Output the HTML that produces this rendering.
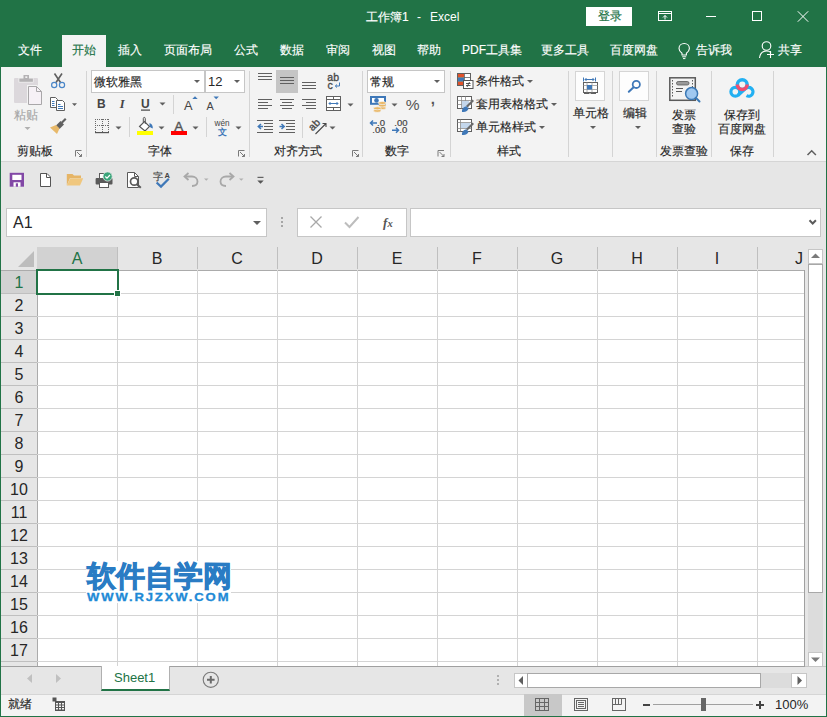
<!DOCTYPE html>
<html><head><meta charset="utf-8">
<style>
*{margin:0;padding:0;box-sizing:border-box}
html,body{width:827px;height:717px;overflow:hidden;background:#217346;font-family:"Liberation Sans",sans-serif;color:#262626}
.a{position:absolute}
.t{position:absolute;font-size:12px;line-height:14px;white-space:nowrap;-webkit-text-stroke:0.15px currentColor}
.w{color:#fff}
.sep{position:absolute;width:1px;background:#d4d4d4}
.dd{position:absolute;width:0;height:0;border-left:3px solid transparent;border-right:3px solid transparent;border-top:3px solid #5f5f5f}
.hl{position:absolute;height:1px;background:#d4d4d4}
.vl{position:absolute;width:1px;background:#d4d4d4}
.ch{position:absolute;top:249px;font-size:16px;line-height:19px;width:80px;text-align:center;color:#262626}
.rh{position:absolute;left:1px;width:36px;font-size:16px;line-height:19px;text-align:center;color:#262626}
</style></head><body>
<!-- title bar -->
<div class="t w" style="left:366px;top:10px;">工作簿1</div><div class="t w" style="-webkit-text-stroke:0;left:417px;top:10px;">-</div><div class="t w" style="-webkit-text-stroke:0;left:430px;top:10px">Excel</div>
<div class="a" style="left:586px;top:7px;width:46px;height:19px;background:#fff"></div>
<div class="t" style="left:598px;top:9px;color:#217346">登录</div>

<!-- tabs -->
<div class="a" style="left:62px;top:35px;width:44px;height:32px;background:#f3f3f3"></div>
<div class="t w" style="left:18px;top:42.5px">文件</div>
<div class="t" style="left:72px;top:42.5px;color:#217346">开始</div>
<div class="t w" style="left:118px;top:42.5px">插入</div>
<div class="t w" style="left:164px;top:42.5px">页面布局</div>
<div class="t w" style="left:234px;top:42.5px">公式</div>
<div class="t w" style="left:280px;top:42.5px">数据</div>
<div class="t w" style="left:326px;top:42.5px">审阅</div>
<div class="t w" style="left:372px;top:42.5px">视图</div>
<div class="t w" style="left:417px;top:42.5px">帮助</div>
<div class="t w" style="left:462px;top:42.5px">PDF工具集</div>
<div class="t w" style="left:541px;top:42.5px">更多工具</div>
<div class="t w" style="left:610px;top:42.5px">百度网盘</div>
<div class="t w" style="left:696px;top:42.5px">告诉我</div>
<div class="t w" style="left:778px;top:42.5px">共享</div>

<!-- ribbon -->
<div class="a" style="left:1px;top:67px;width:825px;height:94px;background:#f3f3f3"></div>
<div class="a" style="left:1px;top:161px;width:825px;height:1px;background:#d5d5d5"></div>


<!-- ribbon separators -->
<div class="sep" style="left:86px;top:71px;height:86px"></div>
<div class="sep" style="left:249px;top:71px;height:86px"></div>
<div class="sep" style="left:362px;top:71px;height:86px"></div>
<div class="sep" style="left:450px;top:71px;height:86px"></div>
<div class="sep" style="left:568px;top:71px;height:86px"></div>
<div class="sep" style="left:612px;top:71px;height:86px"></div>
<div class="sep" style="left:656px;top:71px;height:86px"></div>
<div class="sep" style="left:711px;top:71px;height:86px"></div>
<div class="sep" style="left:773px;top:71px;height:86px"></div>
<!-- ribbon labels -->
<div class="t" style="left:14px;top:108px;color:#a6a6a6">粘贴</div>
<div class="t" style="left:17px;top:144px">剪贴板</div>
<div class="t" style="left:148px;top:144px">字体</div>
<div class="t" style="left:274px;top:144px">对齐方式</div>
<div class="t" style="left:385px;top:144px">数字</div>
<div class="t" style="left:497px;top:144px">样式</div>
<div class="t" style="left:660px;top:144px">发票查验</div>
<div class="t" style="left:730px;top:144px">保存</div>
<!-- font boxes -->
<div class="a" style="left:91px;top:70px;width:114px;height:23px;background:#fff;border:1px solid #c6c6c6"></div>
<div class="a" style="left:205px;top:70px;width:40px;height:23px;background:#fff;border:1px solid #c6c6c6"></div>
<div class="t" style="left:94px;top:75px">微软雅黑</div>
<div class="t" style="-webkit-text-stroke:0;left:208px;top:75px;font-size:13px">12</div>
<div class="dd" style="left:194px;top:80px"></div>
<div class="dd" style="left:234px;top:80px"></div>
<div class="a" style="left:367px;top:70px;width:78px;height:23px;background:#fff;border:1px solid #c6c6c6"></div>
<div class="t" style="left:370px;top:75px">常规</div>
<div class="dd" style="left:434px;top:80px"></div>
<div class="t" style="left:476px;top:74px">条件格式</div>
<div class="t" style="left:476px;top:97px">套用表格格式</div>
<div class="t" style="left:476px;top:120px">单元格样式</div>
<div class="dd" style="left:527px;top:80px"></div>
<div class="dd" style="left:551px;top:103px"></div>
<div class="dd" style="left:539px;top:126px"></div>
<div class="a" style="left:575px;top:71px;width:30px;height:30px;background:#fdfdfd;border:1px solid #d5d5d5"></div>
<div class="t" style="left:573px;top:106px">单元格</div>
<div class="dd" style="left:590px;top:126px"></div>
<div class="a" style="left:619px;top:71px;width:30px;height:30px;background:#fdfdfd;border:1px solid #d5d5d5"></div>
<div class="t" style="left:623px;top:106px">编辑</div>
<div class="dd" style="left:635px;top:126px"></div>
<div class="t" style="left:672px;top:108px">发票</div>
<div class="t" style="left:672px;top:122px">查验</div>
<div class="t" style="left:724px;top:108px">保存到</div>
<div class="t" style="left:718px;top:122px">百度网盘</div>

<!-- QAT + formula area -->
<div class="a" style="left:1px;top:162px;width:825px;height:504px;background:#e6e6e6"></div>


<!-- name box / formula bar -->
<div class="a" style="left:6px;top:208px;width:261px;height:29px;background:#fff;border:1px solid #c6c6c6"></div>
<div class="t" style="-webkit-text-stroke:0;left:13px;top:214px;font-size:16px;line-height:18px">A1</div>
<div class="dd" style="left:253px;top:221px;border-left-width:4px;border-right-width:4px;border-top-width:4px"></div>
<div class="a" style="left:281px;top:217px;width:2px;height:2px;background:#a6a6a6"></div>
<div class="a" style="left:281px;top:221px;width:2px;height:2px;background:#a6a6a6"></div>
<div class="a" style="left:281px;top:225px;width:2px;height:2px;background:#a6a6a6"></div>
<div class="a" style="left:297px;top:208px;width:110px;height:29px;background:#fff;border:1px solid #c6c6c6"></div>
<div class="a" style="left:410px;top:208px;width:411px;height:29px;background:#fff;border:1px solid #c6c6c6"></div>

<!-- grid -->
<div class="a" id="grid" style="left:37px;top:270px;width:768px;height:396px;background:#fff"></div>
<div class="a" style="left:37px;top:247px;width:80px;height:22px;background:#d2d2d2"></div>
<div class="vl" style="left:117px;top:247px;height:22px;background:#bfbfbf"></div>
<div class="vl" style="left:197px;top:247px;height:22px;background:#bfbfbf"></div>
<div class="vl" style="left:277px;top:247px;height:22px;background:#bfbfbf"></div>
<div class="vl" style="left:357px;top:247px;height:22px;background:#bfbfbf"></div>
<div class="vl" style="left:437px;top:247px;height:22px;background:#bfbfbf"></div>
<div class="vl" style="left:517px;top:247px;height:22px;background:#bfbfbf"></div>
<div class="vl" style="left:597px;top:247px;height:22px;background:#bfbfbf"></div>
<div class="vl" style="left:677px;top:247px;height:22px;background:#bfbfbf"></div>
<div class="vl" style="left:757px;top:247px;height:22px;background:#bfbfbf"></div>
<div class="hl" style="left:1px;top:270px;width:804px;background:#ababab"></div>
<div class="ch" style="left:37px;color:#217346">A</div>
<div class="ch" style="left:117px;color:#262626">B</div>
<div class="ch" style="left:197px;color:#262626">C</div>
<div class="ch" style="left:277px;color:#262626">D</div>
<div class="ch" style="left:357px;color:#262626">E</div>
<div class="ch" style="left:437px;color:#262626">F</div>
<div class="ch" style="left:517px;color:#262626">G</div>
<div class="ch" style="left:597px;color:#262626">H</div>
<div class="ch" style="left:677px;color:#262626">I</div>
<div class="ch" style="left:759px;width:80px;text-align:center">J</div>
<div class="a" style="left:1px;top:271px;width:36px;height:22px;background:#d2d2d2"></div>
<div class="rh" style="top:273px;color:#217346">1</div>
<div class="hl" style="left:1px;top:293px;width:36px;background:#bfbfbf"></div>
<div class="rh" style="top:296px;color:#262626">2</div>
<div class="hl" style="left:1px;top:316px;width:36px;background:#bfbfbf"></div>
<div class="rh" style="top:319px;color:#262626">3</div>
<div class="hl" style="left:1px;top:339px;width:36px;background:#bfbfbf"></div>
<div class="rh" style="top:342px;color:#262626">4</div>
<div class="hl" style="left:1px;top:362px;width:36px;background:#bfbfbf"></div>
<div class="rh" style="top:365px;color:#262626">5</div>
<div class="hl" style="left:1px;top:385px;width:36px;background:#bfbfbf"></div>
<div class="rh" style="top:388px;color:#262626">6</div>
<div class="hl" style="left:1px;top:408px;width:36px;background:#bfbfbf"></div>
<div class="rh" style="top:411px;color:#262626">7</div>
<div class="hl" style="left:1px;top:431px;width:36px;background:#bfbfbf"></div>
<div class="rh" style="top:434px;color:#262626">8</div>
<div class="hl" style="left:1px;top:454px;width:36px;background:#bfbfbf"></div>
<div class="rh" style="top:457px;color:#262626">9</div>
<div class="hl" style="left:1px;top:477px;width:36px;background:#bfbfbf"></div>
<div class="rh" style="top:480px;color:#262626">10</div>
<div class="hl" style="left:1px;top:500px;width:36px;background:#bfbfbf"></div>
<div class="rh" style="top:503px;color:#262626">11</div>
<div class="hl" style="left:1px;top:523px;width:36px;background:#bfbfbf"></div>
<div class="rh" style="top:526px;color:#262626">12</div>
<div class="hl" style="left:1px;top:546px;width:36px;background:#bfbfbf"></div>
<div class="rh" style="top:549px;color:#262626">13</div>
<div class="hl" style="left:1px;top:569px;width:36px;background:#bfbfbf"></div>
<div class="rh" style="top:572px;color:#262626">14</div>
<div class="hl" style="left:1px;top:592px;width:36px;background:#bfbfbf"></div>
<div class="rh" style="top:595px;color:#262626">15</div>
<div class="hl" style="left:1px;top:615px;width:36px;background:#bfbfbf"></div>
<div class="rh" style="top:618px;color:#262626">16</div>
<div class="hl" style="left:1px;top:638px;width:36px;background:#bfbfbf"></div>
<div class="rh" style="top:641px;color:#262626">17</div>
<div class="hl" style="left:1px;top:661px;width:36px;background:#bfbfbf"></div>
<div class="vl" style="left:37px;top:270px;height:396px;background:#ababab"></div>
<div class="vl" style="left:117px;top:270px;height:396px"></div>
<div class="vl" style="left:197px;top:270px;height:396px"></div>
<div class="vl" style="left:277px;top:270px;height:396px"></div>
<div class="vl" style="left:357px;top:270px;height:396px"></div>
<div class="vl" style="left:437px;top:270px;height:396px"></div>
<div class="vl" style="left:517px;top:270px;height:396px"></div>
<div class="vl" style="left:597px;top:270px;height:396px"></div>
<div class="vl" style="left:677px;top:270px;height:396px"></div>
<div class="vl" style="left:757px;top:270px;height:396px"></div>
<div class="hl" style="left:37px;top:293px;width:768px"></div>
<div class="hl" style="left:37px;top:316px;width:768px"></div>
<div class="hl" style="left:37px;top:339px;width:768px"></div>
<div class="hl" style="left:37px;top:362px;width:768px"></div>
<div class="hl" style="left:37px;top:385px;width:768px"></div>
<div class="hl" style="left:37px;top:408px;width:768px"></div>
<div class="hl" style="left:37px;top:431px;width:768px"></div>
<div class="hl" style="left:37px;top:454px;width:768px"></div>
<div class="hl" style="left:37px;top:477px;width:768px"></div>
<div class="hl" style="left:37px;top:500px;width:768px"></div>
<div class="hl" style="left:37px;top:523px;width:768px"></div>
<div class="hl" style="left:37px;top:546px;width:768px"></div>
<div class="hl" style="left:37px;top:569px;width:768px"></div>
<div class="hl" style="left:37px;top:592px;width:768px"></div>
<div class="hl" style="left:37px;top:615px;width:768px"></div>
<div class="hl" style="left:37px;top:638px;width:768px"></div>
<div class="hl" style="left:37px;top:661px;width:768px"></div>
<div class="a" style="left:36px;top:269px;width:83px;height:26px;border:2px solid #217346"></div>
<div class="a" style="left:115px;top:291px;width:5px;height:5px;background:#217346;outline:1px solid #fff"></div>

<!-- sheet tab bar -->
<div class="a" style="left:1px;top:666px;width:825px;height:28px;background:#e6e6e6;border-top:1px solid #c6c6c6"></div>
<!-- status -->
<div class="a" style="left:1px;top:694px;width:825px;height:22px;background:#f3f3f3;border-top:1px solid #d5d5d5"></div>

<!-- grid borders -->
<div class="vl" style="left:804px;top:270px;height:397px;background:#a0a0a0"></div>
<div class="hl" style="left:1px;top:666px;width:804px;background:#a0a0a0"></div>
<!-- corner triangle -->
<svg class="a" style="left:18px;top:251px" width="16" height="16"><path d="M16 0 L16 16 L0 16 Z" fill="#bdbdbd"/></svg>
<!-- v scrollbar -->
<div class="a" style="left:808px;top:249px;width:15px;height:15px;background:#fff;border:1px solid #c6c6c6"></div>
<svg class="a" style="left:811px;top:253px" width="9" height="6"><path d="M0 5 L4.5 0.5 L9 5 Z" fill="#7a7a7a"/></svg>
<div class="a" style="left:808px;top:264px;width:15px;height:329px;background:#fff;border:1px solid #a8a8a8"></div>
<div class="a" style="left:808px;top:593px;width:15px;height:59px;background:#dcdcdc"></div>
<div class="a" style="left:808px;top:652px;width:15px;height:15px;background:#fff;border:1px solid #c6c6c6"></div>
<svg class="a" style="left:811px;top:657px" width="9" height="6"><path d="M0 0.5 L4.5 5 L9 0.5 Z" fill="#7a7a7a"/></svg>

<!-- watermark -->
<div class="a" style="left:86px;top:561px;width:145px;height:42px;background:#fff"></div>
<div class="t" style="left:87px;top:560px;font-size:28.6px;line-height:32px;font-weight:bold;color:#2a7cc4;-webkit-text-stroke:0.9px #2a7cc4;letter-spacing:0px">软件自学网</div>
<div class="t" style="left:87px;top:591px;font-size:11px;line-height:12px;font-weight:bold;color:#1e8ad6;letter-spacing:1.6px;transform:scaleX(1.185);transform-origin:0 0;-webkit-text-stroke:0.3px #1e8ad6">WWW.RJZXW.COM</div>

<!-- sheet tabs -->
<svg class="a" style="left:27px;top:674px" width="6" height="9"><path d="M5 0 L0 4.5 L5 9 Z" fill="#c0c0c0"/></svg>
<svg class="a" style="left:56px;top:674px" width="6" height="9"><path d="M0 0 L5 4.5 L0 9 Z" fill="#c0c0c0"/></svg>
<div class="a" style="left:101px;top:666px;width:69px;height:25px;background:#fff;border-left:1px solid #b0b0b0;border-right:1px solid #b0b0b0;border-bottom:2px solid #217346"></div>
<div class="t" style="-webkit-text-stroke:0;left:114px;top:670px;font-size:13px;line-height:16px;color:#217346">Sheet1</div>
<svg class="a" style="left:202px;top:671px" width="18" height="18"><circle cx="8.8" cy="8.8" r="7.6" fill="none" stroke="#7a7a7a" stroke-width="1.1"/><path d="M8.8 5 V12.6 M5 8.8 H12.6" stroke="#6a6a6a" stroke-width="2"/></svg>
<div class="a" style="left:497px;top:675px;width:2px;height:2px;background:#b0b0b0"></div>
<div class="a" style="left:497px;top:679px;width:2px;height:2px;background:#b0b0b0"></div>
<div class="a" style="left:497px;top:683px;width:2px;height:2px;background:#b0b0b0"></div>
<!-- h scrollbar -->
<div class="a" style="left:514px;top:673px;width:14px;height:15px;background:#fff;border:1px solid #c6c6c6"></div>
<svg class="a" style="left:518px;top:676px" width="6" height="9"><path d="M5 0 L0.5 4.5 L5 9 Z" fill="#5f5f5f"/></svg>
<div class="a" style="left:527px;top:673px;width:234px;height:15px;background:#fff;border:1px solid #a8a8a8"></div>
<div class="a" style="left:761px;top:673px;width:30px;height:15px;background:#dcdcdc"></div>
<div class="a" style="left:791px;top:673px;width:16px;height:15px;background:#fff;border:1px solid #c6c6c6"></div>
<svg class="a" style="left:797px;top:676px" width="6" height="9"><path d="M0.5 0 L5 4.5 L0.5 9 Z" fill="#5f5f5f"/></svg>
<!-- status bar -->
<div class="t" style="left:8px;top:697px">就绪</div>
<div class="a" style="left:524px;top:694px;width:38px;height:22px;background:#c8c8c8"></div>
<div class="t" style="-webkit-text-stroke:0;left:775px;top:697px;font-size:13px;line-height:15px">100%</div>
<div class="a" style="left:643px;top:704px;width:7px;height:2px;background:#444"></div>
<div class="a" style="left:653px;top:704px;width:100px;height:1px;background:#a0a0a0"></div>
<div class="a" style="left:701px;top:698px;width:5px;height:13px;background:#666"></div>
<div class="a" style="left:756px;top:704px;width:8px;height:2px;background:#444"></div>
<div class="a" style="left:759px;top:701px;width:2px;height:8px;background:#444"></div>

<svg class="a" style="left:0;top:0" width="827" height="717" viewBox="0 0 827 717">
<!-- title bar icons -->
<g fill="none" stroke="#fff" stroke-width="1">
<rect x="658.5" y="11.5" width="13" height="9"/>
<path d="M658.5 13.5 H671.5 M665 19.5 V15.5 M663 17.5 L665 15.5 L667 17.5"/>
<path d="M706 16.5 H716"/>
<rect x="752.5" y="11.5" width="9" height="9"/>
<path d="M797.8 11.3 L808.2 21.7 M808.2 11.3 L797.8 21.7"/>
<!-- lightbulb -->
<path d="M682 55 V53.2 C680.2 51.8 679 50.3 679 48.5 C679 45.6 681.3 43.5 684.2 43.5 C687.1 43.5 689.4 45.6 689.4 48.5 C689.4 50.3 688.2 51.8 686.4 53.2 V55 Z" stroke-width="1.1"/>
<path d="M682.2 56.8 H686.2 M683 58.6 H685.4"/>
<!-- person -->
<circle cx="766.5" cy="46" r="4.3" stroke-width="1.1"/>
<path d="M759.5 58 C760 53.5 762.5 51 766.5 51 C768.5 51 770 51.6 771 52.5" stroke-width="1.1"/>
<path d="M770.5 51 V58 M767 54.5 H774" stroke-width="1.1"/>
</g>

<!-- clipboard (paste) -->
<rect x="14" y="78" width="24" height="25" rx="1" fill="#dcd8dc"/>
<path d="M18.5 78 H33.5 V82.5 H18.5 Z" fill="#f3f3f3"/>
<rect x="19.3" y="78.5" width="13.6" height="3.3" fill="#b4b2b4"/>
<rect x="23.5" y="75" width="5.5" height="4" fill="#b4b2b4"/>
<rect x="25.3" y="76.3" width="2" height="1.7" fill="#f3f3f3"/>
<path d="M27 85 H37 L43 91 V105.6 H27 Z" fill="#f3f3f3"/>
<path d="M28.5 86.5 H36.5 L41.5 91.5 V104.5 H28.5 Z" fill="#f6f1f6" stroke="#a9a7a9" stroke-width="1"/>
<path d="M36.5 86.5 V91.5 H41.5" fill="none" stroke="#a9a7a9" stroke-width="1"/>
<!-- paste dropdown -->
<path d="M24.5 127 H30.5 L27.5 130 Z" fill="#b0b0b0"/>

<!-- scissors -->
<path d="M54.5 73.5 L60.5 82.5 M62 73.5 L56 82.5" stroke="#5f5f5f" stroke-width="1.6" fill="none"/>
<circle cx="54.2" cy="85" r="2.6" fill="none" stroke="#4a86c8" stroke-width="1.2"/>
<circle cx="62" cy="85" r="2.6" fill="none" stroke="#4a86c8" stroke-width="1.2"/>
<!-- copy -->
<path d="M50.5 97.5 H55.5 L57.5 99.5 V107.5 H50.5 Z" fill="#fff" stroke="#5f5f5f" stroke-width="1"/>
<path d="M52 101.5 H54.5 M52 103.5 H54.5 M52 105.5 H54.5" stroke="#3f78b8" stroke-width="1"/>
<path d="M56.5 100.5 H62.5 L64.5 102.5 V110.5 H56.5 Z" fill="#fff" stroke="#5f5f5f" stroke-width="1"/>
<path d="M58 104.5 H60.5 M58 106.5 H63 M58 108.5 H63" stroke="#3f78b8" stroke-width="1"/>
<path d="M72 103.3 H77 L74.5 106 Z" fill="#5f5f5f"/>
<!-- format painter -->
<path d="M61 122 L65 118 L66.5 119.5 L62.5 123.5 Z" fill="#606060"/>
<path d="M56 125.5 L60.5 121 L64 124.5 L59.5 129 Z" fill="#606060"/>
<path d="M50 127.5 L56 125 L59.5 128.5 L57 134 Z" fill="#e8b96a"/>

<!-- dialog launchers -->
<g fill="none" stroke="#7a7a7a" stroke-width="1">
<path d="M75.5 156.5 V150.5 H81.5 M77 152 L81.5 156.5 M79 156.5 H81.5 V154"/>
<path d="M238.5 156.5 V150.5 H244.5 M240 152 L244.5 156.5 M242 156.5 H244.5 V154"/>
<path d="M352.5 156.5 V150.5 H358.5 M354 152 L358.5 156.5 M356 156.5 H358.5 V154"/>
<path d="M438 156.5 V150.5 H444 M439.5 152 L444 156.5 M441.5 156.5 H444 V154"/>
</g>
<!-- collapse chevron -->
<path d="M807.5 155 L811.7 150.8 L815.9 155" fill="none" stroke="#5f5f5f" stroke-width="1.5"/>
</svg>


<svg class="a" style="left:0;top:0" width="827" height="717" viewBox="0 0 827 717">
<!-- font group -->
<text x="97" y="108.3" font-family="Liberation Sans" font-weight="bold" font-size="12" fill="#444">B</text>
<text x="119.8" y="108.2" font-family="Liberation Serif" font-style="italic" font-weight="bold" font-size="12.5" fill="#444">I</text>
<text x="141" y="108.3" font-family="Liberation Sans" font-weight="bold" font-size="12" fill="#444">U</text>
<rect x="141" y="109.5" width="9" height="1.2" fill="#444"/>
<path d="M159.5 102.5 H165.5 L162.5 105.5 Z" fill="#5f5f5f"/>
<rect x="173" y="95" width="1" height="19" fill="#d4d4d4"/>
<text x="184" y="109.6" font-family="Liberation Sans" font-size="12.8" fill="#444">A</text>
<path d="M192.3 99 L195 96.3 L197.7 99 Z" fill="#3f78b8"/>
<text x="206.5" y="109.6" font-family="Liberation Sans" font-size="10.8" fill="#444">A</text>
<path d="M213.5 96.5 L216.2 99.2 L218.9 96.5 Z" fill="#3f78b8"/>
<!-- borders -->
<g fill="#6a6a6a"><rect x="95" y="119" width="1" height="1"/><rect x="95" y="121" width="1" height="1"/><rect x="95" y="123" width="1" height="1"/><rect x="95" y="125" width="1" height="1"/><rect x="95" y="127" width="1" height="1"/><rect x="95" y="129" width="1" height="1"/><rect x="95" y="131" width="1" height="1"/><rect x="102" y="119" width="1" height="1"/><rect x="102" y="121" width="1" height="1"/><rect x="102" y="123" width="1" height="1"/><rect x="102" y="125" width="1" height="1"/><rect x="102" y="127" width="1" height="1"/><rect x="102" y="129" width="1" height="1"/><rect x="102" y="131" width="1" height="1"/><rect x="108" y="119" width="1" height="1"/><rect x="108" y="121" width="1" height="1"/><rect x="108" y="123" width="1" height="1"/><rect x="108" y="125" width="1" height="1"/><rect x="108" y="127" width="1" height="1"/><rect x="108" y="129" width="1" height="1"/><rect x="108" y="131" width="1" height="1"/><rect x="95" y="119" width="1" height="1"/><rect x="97" y="119" width="1" height="1"/><rect x="99" y="119" width="1" height="1"/><rect x="101" y="119" width="1" height="1"/><rect x="103" y="119" width="1" height="1"/><rect x="105" y="119" width="1" height="1"/><rect x="107" y="119" width="1" height="1"/><rect x="95" y="125" width="1" height="1"/><rect x="97" y="125" width="1" height="1"/><rect x="99" y="125" width="1" height="1"/><rect x="101" y="125" width="1" height="1"/><rect x="103" y="125" width="1" height="1"/><rect x="105" y="125" width="1" height="1"/><rect x="107" y="125" width="1" height="1"/></g>
<rect x="95" y="132" width="14" height="1.2" fill="#555"/>
<path d="M115.5 126.5 H121.5 L118.5 129.5 Z" fill="#5f5f5f"/>
<rect x="129" y="117" width="1" height="20" fill="#d4d4d4"/>
<!-- fill color -->
<path d="M139.5 126.5 L144.5 121.5 L149.5 126.5 L145 131 Z" fill="#fff" stroke="#555" stroke-width="1.1"/>
<path d="M143.3 122.5 V118.5 C143.3 117 145.3 117 145.3 118.5 V124" fill="none" stroke="#555" stroke-width="1"/>
<path d="M149.5 123 C151.5 123.5 153 125.5 152.8 128.5 C151 128 149.8 127 149.5 126 Z" fill="#3f78b8"/>
<rect x="137" y="131" width="16" height="4" fill="#ffff00"/>
<path d="M158.5 126.5 H164.5 L161.5 129.5 Z" fill="#5f5f5f"/>
<!-- font color -->
<text x="174.3" y="130.5" font-family="Liberation Sans" font-size="13.5" fill="#555" stroke="#555" stroke-width="0.4">A</text>
<rect x="171" y="131" width="16" height="4" fill="#ff0000"/>
<path d="M192.5 126.5 H198.5 L195.5 129.5 Z" fill="#5f5f5f"/>
<rect x="206" y="117" width="1" height="20" fill="#d4d4d4"/>
<!-- phonetic -->
<text x="214.5" y="126.3" font-family="Liberation Sans" font-size="8.2" fill="#444">wén</text>
<text x="218" y="134.8" font-size="9" fill="#3f78b8" font-weight="bold">文</text>
<path d="M235.5 126.5 H241.5 L238.5 129.5 Z" fill="#5f5f5f"/>
</svg>


<svg class="a" style="left:0;top:0" width="827" height="717" viewBox="0 0 827 717">
<!-- alignment -->
<rect x="276" y="70" width="22" height="23" fill="#c5c5c5"/>
<g stroke="#606060" stroke-width="1" fill="none">
<path d="M258 73.5 H272 M258 76.5 H272 M258 79.5 H272"/>
<path d="M280 77.5 H294 M280 80.5 H294 M280 83.5 H294"/>
<path d="M302 82.5 H316 M302 85.5 H316 M302 88.5 H316"/>
<path d="M258 99.5 H272 M258 102.5 H268 M258 105.5 H272 M258 108.5 H268"/>
<path d="M280 99.5 H294 M282 102.5 H292 M280 105.5 H294 M282 108.5 H292"/>
<path d="M302 99.5 H316 M306 102.5 H316 M302 105.5 H316 M306 108.5 H316"/>
<path d="M257 120.5 H273 M264 123.5 H273 M264 126.5 H273 M264 129.5 H273 M257 132.5 H273"/>
<path d="M279 120.5 H295 M286 123.5 H295 M286 126.5 H295 M286 129.5 H295 M279 132.5 H295"/>
</g>
<path d="M263 126.5 H258.5 M261 124 L258.3 126.5 L261 129" stroke="#3f78b8" stroke-width="1.5" fill="none"/>
<path d="M279.5 126.5 H284 M281.5 124 L284.2 126.5 L281.5 129" stroke="#3f78b8" stroke-width="1.5" fill="none"/>
<text x="327.3" y="80.8" font-family="Liberation Sans" font-size="10.5" fill="#4a4a4a" stroke="#4a4a4a" stroke-width="0.35">ab</text>
<text x="327.5" y="88.5" font-family="Liberation Sans" font-size="10.5" fill="#4a4a4a" stroke="#4a4a4a" stroke-width="0.35">c</text>
<path d="M339.5 82.5 V86 H335.5 M337 84.5 L335.3 86 L337 87.5" stroke="#3f78b8" stroke-width="1" fill="none"/>
<!-- merge -->
<rect x="326.5" y="96.5" width="14" height="14" fill="#fff" stroke="#606060" stroke-width="1"/>
<path d="M326.5 99.5 H340.5 M326.5 107.5 H340.5 M333.5 96.5 V99.5 M333.5 107.5 V110.5" stroke="#606060" stroke-width="1" fill="none"/>
<path d="M329 103.5 H338 M330.5 102 L329 103.5 L330.5 105 M336.5 102 L338 103.5 L336.5 105" stroke="#3f78b8" stroke-width="1" fill="none"/>
<path d="M347.5 103.5 H353.5 L350.5 106.5 Z" fill="#5f5f5f"/>
<rect x="302" y="117" width="1" height="21" fill="#d4d4d4"/>
<!-- orientation -->
<text x="0" y="0" font-family="Liberation Sans" font-size="10.5" fill="#4a4a4a" stroke="#4a4a4a" stroke-width="0.35" transform="translate(312.5,131.5) rotate(-45)">ab</text>
<path d="M315.5 134 L326 123.5 M322.5 123.5 H326 V127" stroke="#4a4a4a" stroke-width="1.1" fill="none"/>
<path d="M329.5 126.5 H335.5 L332.5 129.5 Z" fill="#5f5f5f"/>

<!-- number -->
<rect x="371" y="97" width="14" height="6.8" fill="#fff" stroke="#3f78b8" stroke-width="2"/>
<circle cx="376.5" cy="100.4" r="2.3" fill="#3f78b8"/>
<g fill="#eab765" stroke="#f3f3f3" stroke-width="0.7">
<ellipse cx="382.3" cy="108" rx="3.8" ry="1.5"/>
<ellipse cx="382.3" cy="105.5" rx="3.8" ry="1.5"/>
<ellipse cx="382.3" cy="103" rx="3.8" ry="1.5"/>
<ellipse cx="377.3" cy="110.8" rx="3.8" ry="1.5"/>
<ellipse cx="377.3" cy="108.3" rx="3.8" ry="1.5"/>
</g>
<path d="M391.5 103.5 H397.5 L394.5 106.5 Z" fill="#5f5f5f"/>
<text x="405.8" y="110" font-family="Liberation Sans" font-size="15.5" fill="#555">%</text>
<text x="430.8" y="103.5" font-family="Liberation Sans" font-weight="bold" font-size="15" fill="#555">,</text>
<text x="377" y="126.2" font-family="Liberation Sans" font-size="9.5" fill="#444" stroke="#444" stroke-width="0.2">.0</text>
<text x="372.3" y="133" font-family="Liberation Sans" font-size="9.5" fill="#444" stroke="#444" stroke-width="0.2">.00</text>
<path d="M377 123 H370.5 M373 120.5 L370.5 123 L373 125.5" stroke="#3f78b8" stroke-width="1.5" fill="none"/>
<text x="394.3" y="126.2" font-family="Liberation Sans" font-size="9.5" fill="#444" stroke="#444" stroke-width="0.2">.00</text>
<text x="399.3" y="133" font-family="Liberation Sans" font-size="9.5" fill="#444" stroke="#444" stroke-width="0.2">.0</text>
<path d="M392 130.3 H398.5 M396 127.8 L398.5 130.3 L396 132.8" stroke="#3f78b8" stroke-width="1.5" fill="none"/>

<!-- styles -->
<rect x="457.5" y="73.5" width="13" height="12" fill="#fff" stroke="#606060" stroke-width="1"/>
<rect x="458" y="74" width="6" height="3" fill="#e0522b"/>
<rect x="458" y="78" width="6" height="3" fill="#3f78b8"/>
<rect x="458" y="82" width="6" height="3" fill="#e0522b"/>
<path d="M464.5 73.5 V85.5 M457.5 77.5 H470.5 M457.5 81.5 H470.5" stroke="#606060" stroke-width="0.8" fill="none"/>
<rect x="463.5" y="80.5" width="9.5" height="8" fill="#fff" stroke="#555" stroke-width="1"/>
<path d="M466 83.5 H470.5 M466 85.5 H470.5 M469.5 82 L467 87" stroke="#444" stroke-width="0.9" fill="none"/>
<!-- table format -->
<rect x="457.5" y="96.5" width="14" height="12" fill="#fff" stroke="#606060" stroke-width="1"/>
<path d="M457.5 100.5 H471.5 M457.5 104.5 H471.5 M461.5 96.5 V108.5 M465.5 96.5 V108.5" stroke="#8a8a8a" stroke-width="0.8" fill="none"/>
<rect x="462" y="101" width="7" height="7" fill="#c4d7ec"/>
<path d="M466 106 L472.5 99.5 L474 101 L467.5 107.5 Z" fill="#6a6a6a"/>
<path d="M462 112 C461.5 109 463.5 106.5 466.5 106.5 L468.5 108.5 C468 111 465.5 112.5 462 112 Z" fill="#3f78b8"/>
<!-- cell styles -->
<rect x="457.5" y="119.5" width="14" height="12" fill="#fff" stroke="#606060" stroke-width="1"/>
<path d="M457.5 122.5 H471.5 M457.5 128.5 H471.5 M460.5 119.5 V131.5" stroke="#8a8a8a" stroke-width="0.8" fill="none"/>
<rect x="461" y="123" width="9" height="5" fill="#c4d7ec"/>
<path d="M466 129 L472.5 122.5 L474 124 L467.5 130.5 Z" fill="#6a6a6a"/>
<path d="M462 135 C461.5 132 463.5 129.5 466.5 129.5 L468.5 131.5 C468 134 465.5 135.5 462 135 Z" fill="#3f78b8"/>

<!-- cells icon -->
<path d="M583.5 77.5 V81.5 M595.5 77.5 V81.5 M585 79.5 H594 M586.5 78 L585 79.5 L586.5 81 M592.5 78 L594 79.5 L592.5 81" stroke="#3f78b8" stroke-width="1" fill="none"/>
<rect x="583.5" y="82.5" width="14" height="10" fill="#fff" stroke="#606060" stroke-width="1"/>
<path d="M583.5 85.5 H597.5 M583.5 89.5 H597.5 M587 82.5 V92.5 M592 82.5 V92.5" stroke="#9a9a9a" stroke-width="0.8" fill="none"/>
<rect x="587" y="85" width="5" height="4.5" fill="#3f78b8"/>
<path d="M584 93.5 H589.5 M590.5 93.5 H596" stroke="#606060" stroke-width="1"/>
<!-- editing magnifier -->
<circle cx="636.3" cy="84.4" r="3.6" fill="none" stroke="#3f78b8" stroke-width="1.8"/>
<path d="M633.6 87.2 L628.8 91.8" stroke="#3f78b8" stroke-width="2" stroke-linecap="round"/>
<!-- invoice -->
<rect x="669.8" y="77.8" width="25.5" height="22.5" fill="#f3f3f3" stroke="#5a5a5a" stroke-width="1.5"/>
<path d="M672.5 80 V98 M692.5 80 V88" stroke="#5a5a5a" stroke-width="1" stroke-dasharray="1.5 1.5" fill="none"/>
<rect x="676.5" y="81.5" width="12.5" height="3.5" rx="1.7" fill="#9a9a9a" stroke="#5a5a5a" stroke-width="0.8"/>
<path d="M676 88.5 H683 M676 91.5 H682" stroke="#5a5a5a" stroke-width="1.2"/>
<circle cx="691.6" cy="93.6" r="6" fill="#9fc8f0" stroke="#3a78b5" stroke-width="1.5"/>
<path d="M695.8 97.8 L699.5 101.5" stroke="#3a78b5" stroke-width="2" stroke-linecap="round"/>
<!-- baidu -->
<g fill="none" stroke="#22b0f2" stroke-width="3.2">
<circle cx="735.3" cy="91.8" r="4.4"/>
<path d="M737.8 95.5 L745.5 88.5"/>
<path d="M745.6 88.6 A4.4 4.4 0 1 1 746.5 95.7"/>
<circle cx="742.25" cy="84.6" r="4.9" stroke-width="3.5"/>
<path d="M737.35 84.6 A4.9 4.9 0 0 0 747.15 84.6" stroke="#f24e6f" stroke-width="3.5"/>
</g>
</svg>


<svg class="a" style="left:0;top:0" width="827" height="717" viewBox="0 0 827 717">
<!-- QAT -->
<path d="M9.7 172.8 H24 V186.7 H9.7 Z" fill="#8248a6"/>
<rect x="12.3" y="174.8" width="9.2" height="5.2" fill="#fff"/>
<rect x="13.5" y="182.3" width="7" height="4.4" fill="#fff"/>
<rect x="15.8" y="183.3" width="2.2" height="3.4" fill="#8248a6"/>
<path d="M40.5 173.5 H47 L50.5 177 V186.5 H40.5 Z" fill="#fff" stroke="#555" stroke-width="1"/>
<path d="M46.5 173.5 V177.5 H50.5" fill="none" stroke="#555" stroke-width="1"/>
<path d="M66.8 185.5 V174 H72.5 L74 175.5 H81 V178 H70 L66.8 185.5 Z" fill="#e6b566"/>
<path d="M66.8 185.5 L70.3 178.3 H83.2 L80 185.5 Z" fill="#f0c77e"/>
<!-- print -->
<rect x="99.5" y="173.5" width="8" height="5" fill="#fff" stroke="#5a5a5a" stroke-width="1"/>
<rect x="95.6" y="178" width="16.9" height="6.5" rx="1" fill="#5a5a5a"/>
<rect x="99.5" y="182.5" width="9" height="5" fill="#fff" stroke="#5a5a5a" stroke-width="1"/>
<circle cx="107.6" cy="176.5" r="4.6" fill="#3aa57a" stroke="#e6e6e6" stroke-width="0.8"/>
<path d="M105.3 176.5 L107 178.2 L110 175" fill="none" stroke="#fff" stroke-width="1.2"/>
<!-- preview -->
<path d="M127.5 172.5 H134.5 L138.5 176.5 V187.5 H127.5 Z" fill="#fff" stroke="#5a5a5a" stroke-width="1"/>
<path d="M134.5 172.5 V176.5 H138.5" fill="none" stroke="#5a5a5a" stroke-width="1"/>
<circle cx="134.2" cy="181.5" r="3.7" fill="#fff" stroke="#5a5a5a" stroke-width="1.7"/>
<path d="M136.8 184.2 L140.8 187.8" stroke="#5a5a5a" stroke-width="2"/>
<!-- spelling -->
<text x="153.2" y="179.6" font-size="10" fill="#444" stroke="#444" stroke-width="0.2">字</text>
<text x="164.5" y="178.3" font-family="Liberation Sans" font-weight="bold" font-size="7.5" fill="#444">A</text>
<path d="M156.6 182.5 L161 186.6 L168.8 178.8" fill="none" stroke="#3f78b8" stroke-width="2.2"/>
<!-- undo / redo -->
<path d="M185.5 176.5 H192 C195 176.5 197.5 178.5 197.5 181.5 C197.5 184.5 195 186 192 186" fill="none" stroke="#a8a8a8" stroke-width="1.8"/>
<path d="M188.5 173 L184.5 176.5 L188.5 180" fill="none" stroke="#a8a8a8" stroke-width="1.8"/>
<path d="M204 178.5 H208.5 L206.25 180.8 Z" fill="#b0b0b0"/>
<path d="M232.5 176.5 H226 C223 176.5 220.5 178.5 220.5 181.5 C220.5 184.5 223 186 226 186" fill="none" stroke="#a8a8a8" stroke-width="1.8"/>
<path d="M229.5 173 L233.5 176.5 L229.5 180" fill="none" stroke="#a8a8a8" stroke-width="1.8"/>
<path d="M239 178.5 H243.5 L241.25 180.8 Z" fill="#b0b0b0"/>
<rect x="257.5" y="176.8" width="6" height="1.1" fill="#555"/>
<path d="M257.3 180.5 H263.7 L260.5 183.7 Z" fill="#555"/>

<!-- formula bar icons -->
<path d="M310.5 216.5 L321.5 227.5 M321.5 216.5 L310.5 227.5" stroke="#a8a8a8" stroke-width="1.3" fill="none"/>
<path d="M345 222.5 L349.5 227 L358.5 217" stroke="#bdbdbd" stroke-width="2" fill="none"/>
<text x="383" y="227" font-family="Liberation Serif" font-style="italic" font-weight="bold" font-size="13" fill="#555">f</text>
<text x="387.5" y="227" font-family="Liberation Serif" font-style="italic" font-weight="bold" font-size="10.5" fill="#555">x</text>
<path d="M809.5 220.3 L812.7 223.5 L815.9 220.3" stroke="#5a5a5a" stroke-width="2" fill="none"/>

<!-- status bar icons -->
<rect x="52.5" y="697.5" width="4" height="4" fill="#555"/>
<g fill="#555">
<rect x="55" y="701" width="10" height="10"/>
</g>
<g fill="#f3f3f3">
<rect x="56" y="703" width="2" height="1.5"/><rect x="59" y="703" width="2" height="1.5"/><rect x="62" y="703" width="2" height="1.5"/>
<rect x="56" y="705.5" width="2" height="1.5"/><rect x="59" y="705.5" width="2" height="1.5"/><rect x="62" y="705.5" width="2" height="1.5"/>
<rect x="56" y="708" width="2" height="1.5"/><rect x="59" y="708" width="2" height="1.5"/><rect x="62" y="708" width="2" height="1.5"/>
</g>
<!-- normal view grid -->
<g stroke="#666" stroke-width="1" fill="none">
<rect x="535.5" y="698.5" width="13" height="12"/>
<path d="M535.5 702.5 H548.5 M535.5 706.5 H548.5 M539.5 698.5 V710.5 M544.5 698.5 V710.5"/>
<rect x="574.5" y="698.5" width="13" height="12"/>
<rect x="576.5" y="700.5" width="9" height="8"/>
<path d="M578 702.5 H584 M578 704.5 H584 M578 706.5 H584"/>
<rect x="612.5" y="698.5" width="13" height="12"/><path d="M612.5 704.5 H621.5 V698.5 M615.5 698.5 V704.5 M618.5 698.5 V704.5"/>
</g>
</svg>

</body></html>
